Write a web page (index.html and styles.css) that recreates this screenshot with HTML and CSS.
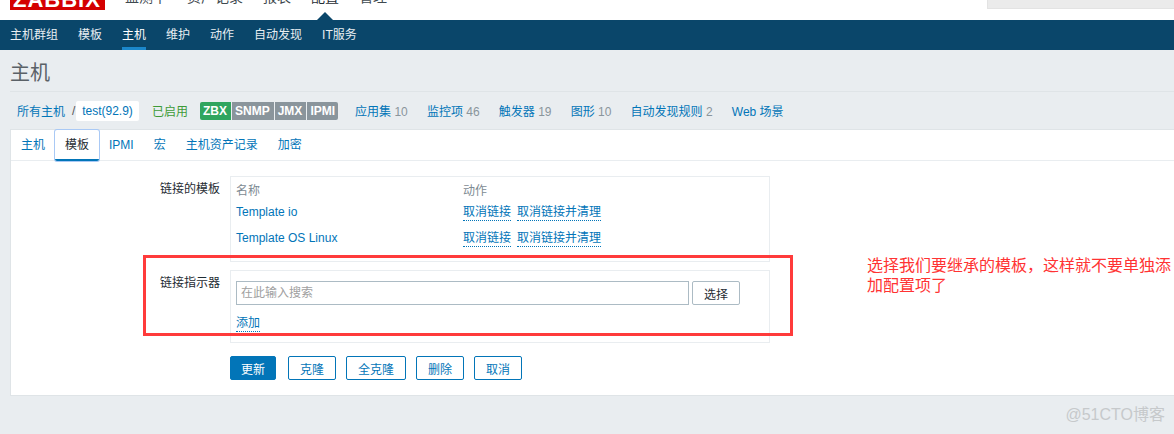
FILE: index.html
```html
<!DOCTYPE html>
<html lang="zh">
<head>
<meta charset="utf-8">
<title>主机 - Zabbix</title>
<link rel="stylesheet" href="styles.css">
</head>
<body>
<header class="topbar">
  <div class="logo">ZABBIX</div>
  <nav class="mainnav">
    <a class="mainlink">监测中</a>
    <a class="mainlink">资产记录</a>
    <a class="mainlink">报表</a>
    <a class="mainlink current">配置</a>
    <a class="mainlink">管理</a>
  </nav>
  <div class="searchbox"></div>
</header>
<nav class="subnav">
  <a>主机群组</a>
  <a>模板</a>
  <a class="current">主机</a>
  <a>维护</a>
  <a>动作</a>
  <a>自动发现</a>
  <a>IT服务</a>
</nav>
<main class="page">
  <h1 class="title">主机</h1>
  <div class="hostbar">
    <a class="crumb">所有主机</a>
    <span class="slash">/</span>
    <a class="crumb-current">test(92.9)</a>
    <span class="enabled">已启用</span>
    <div class="badges">
      <span class="badge on">ZBX</span>
      <span class="badge">SNMP</span>
      <span class="badge">JMX</span>
      <span class="badge">IPMI</span>
    </div>
    <a class="hostlink first">应用集 <em>10</em></a>
    <a class="hostlink">监控项 <em>46</em></a>
    <a class="hostlink">触发器 <em>19</em></a>
    <a class="hostlink">图形 <em>10</em></a>
    <a class="hostlink">自动发现规则 <em>2</em></a>
    <a class="hostlink">Web 场景</a>
  </div>
  <section class="card">
    <div class="tabs">
      <a>主机</a>
      <a class="active">模板</a>
      <a>IPMI</a>
      <a>宏</a>
      <a>主机资产记录</a>
      <a>加密</a>
    </div>
    <form class="form">
      <div class="formrow">
        <label class="formlabel">链接的模板</label>
        <div class="box linked">
          <div class="lt-row head"><span class="c-name">名称</span><span>动作</span></div>
          <div class="lt-row"><a class="c-name tpl">Template io</a><span class="acts"><a class="dotted">取消链接</a><a class="dotted">取消链接并清理</a></span></div>
          <div class="lt-row"><a class="c-name tpl">Template OS Linux</a><span class="acts"><a class="dotted">取消链接</a><a class="dotted">取消链接并清理</a></span></div>
        </div>
      </div>
      <div class="formrow">
        <label class="formlabel">链接指示器</label>
        <div class="box picker">
          <div class="pickrow">
            <input class="search" type="text" placeholder="在此输入搜索">
            <button class="btn-grey" type="button">选择</button>
          </div>
          <a class="dotted add">添加</a>
        </div>
      </div>
      <div class="actions">
        <button class="btn primary" type="button">更新</button>
        <button class="btn clone" type="button">克隆</button>
        <button class="btn wide" type="button">全克隆</button>
        <button class="btn" type="button">删除</button>
        <button class="btn" type="button">取消</button>
      </div>
    </form>
    <div class="callout"></div>
    <p class="note">选择我们要继承的模板，这样就不要单独添加配置项了</p>
  </section>
</main>
<div class="watermark">@51CTO博客</div>
</body>
</html>
```
FILE: styles.css
```css
* { box-sizing: border-box; }

html, body { margin: 0; height: 434px; overflow: hidden; }

body {
  position: relative;
  background: #e9edf0;
  font-family: "Liberation Sans", "Noto Sans CJK SC", sans-serif;
  font-size: 12px;
  color: #1f2c33;
}

a { color: #0275b8; text-decoration: none; }

/* Top bar */
.topbar {
  height: 20px;
  background: #fff;
  position: relative;
  display: flex;
  overflow: hidden;
}

.logo {
  width: 95px;
  height: 10px;
  margin-left: 10px;
  padding-left: 3px;
  background: #d40000;
  color: #fff;
  font-size: 22px;
  font-weight: bold;
  line-height: 0;
  letter-spacing: 1px;
  overflow: hidden;
  white-space: nowrap;
}

.mainnav {
  display: flex;
  gap: 20px;
  height: 33px;
  margin: -13px 0 0 20px;
}

.mainlink {
  font-size: 14px;
  line-height: 20px;
  color: #3f4a50;
  white-space: nowrap;
}

.mainnav .current { position: relative; color: #1f2c33; }

.mainnav .current::after {
  content: "";
  position: absolute;
  left: 50%;
  top: 25px;
  margin-left: -8px;
  border: 8px solid transparent;
  border-top: 0;
  border-bottom-color: #0a466a;
}

.searchbox {
  position: absolute;
  right: 0;
  top: 0;
  width: 187px;
  height: 9px;
  background: #ebebeb;
  border: 1px solid #e3e3e3;
  border-top: 0;
  border-right: 0;
}

/* Second level navigation */
.subnav {
  height: 30px;
  background: #0a466a;
  display: flex;
  padding-left: 10px;
  gap: 20px;
}

.subnav a {
  color: #e8eef2;
  line-height: 31px;
  height: 30px;
  white-space: nowrap;
}

.subnav a.current { color: #fff; border-bottom: 3px solid #1b87cb; }

/* Page head */
.title {
  height: 42px;
  margin: 0 0 0 10px;
  padding-top: 9px;
  font-size: 20px;
  line-height: 28px;
  font-weight: normal;
  color: #5a6167;
  border-bottom: 1px solid #dfe4e7;
}

.hostbar {
  height: 37px;
  margin-left: 17px;
  display: flex;
  align-items: center;
  white-space: nowrap;
}

.slash { margin-left: 7px; color: #555; width: 5px; }

.crumb-current {
  background: #fff;
  margin-left: -1px;
  width: 63px;
  height: 20px;
  line-height: 20px;
  text-align: center;
  border-radius: 2px;
}

.enabled { color: #3d9b38; margin-left: 13px; width: 48px; }

.badges { display: flex; height: 18px; border-radius: 2px; overflow: hidden; }

.badge {
  background: #8a959c;
  color: #fff;
  font-weight: bold;
  line-height: 18px;
  padding: 0 4px 0 3px;
  margin-right: 1px;
}

.badge:last-child { margin-right: 0; padding-right: 3px; }
.badge.on { background: #30a55f; }

.hostlink { margin-left: 19.2px; }
.hostlink.first { margin-left: 17px; }
.hostlink em { font-style: normal; color: #8a959c; }

/* Card */
.card {
  position: relative;
  margin-left: 10px;
  height: 267px;
  background: #fff;
  border: 1px solid #dfe4e7;
  border-right: 0;
}

.tabs {
  display: flex;
  height: 31px;
  border-bottom: 1px solid #e9edf0;
}

.tabs a {
  padding: 0 10px;
  height: 31px;
  line-height: 31px;
  white-space: nowrap;
}

.tabs a.active {
  color: #1f2c33;
  border-bottom: 2px solid #0275b8;
  box-shadow: 0 0 0 1px #a9c9f5;
  border-radius: 2px;
}

.form { padding-top: 15px; }

.formrow { display: flex; }
.formrow + .formrow { margin-top: 8px; }

.formlabel {
  width: 209px;
  text-align: right;
  padding-top: 3px;
  margin-right: 10px;
}

.box {
  width: 540px;
  border: 1px solid #e9edf0;
  padding: 5px;
}

.linked { height: 86px; padding-top: 6px; }

.lt-row { display: flex; height: 26px; align-items: flex-start; }
.lt-row.head { height: 21px; color: #7d8a92; line-height: 17px; }
.c-name { width: 227px; flex: none; }
.tpl { line-height: 17px; }

.acts { display: flex; gap: 6px; }

.dotted {
  border-bottom: 1px dotted #0275b8;
  line-height: 15px;
  height: 16px;
  margin-top: 1px;
}

.picker { height: 73px; padding-top: 10px; }

.pickrow { display: flex; gap: 3px; }

.search {
  width: 453px;
  height: 24px;
  border: 1px solid #acbbc4;
  padding: 0 4px;
  font: inherit;
  background: #fff;
}

.search::placeholder { color: #a0a0a0; opacity: 1; }

.btn-grey {
  width: 48px;
  height: 24px;
  border: 1px solid #acbbc4;
  border-radius: 2px;
  background: #fff;
  font: inherit;
  color: #1f2c33;
  padding: 0;
}

.add { display: inline-block; margin-top: 11px; }

.actions {
  display: flex;
  margin: 13px 0 0 219px;
  gap: 10px;
}

.btn {
  width: 48px;
  height: 24px;
  background: #fff;
  border: 1px solid #0275b8;
  border-radius: 2px;
  color: #0275b8;
  font: inherit;
  padding: 0;
}

.btn.primary { background: #0275b8; color: #fff; width: 46px; margin-right: 2px; }
.btn.wide { width: 60px; }

/* Red annotation laid over the form */
.callout {
  position: absolute;
  left: 132px;
  top: 125px;
  width: 650px;
  height: 81px;
  border: 3px solid #ff3b3b;
}

.note {
  position: absolute;
  left: 856px;
  top: 126px;
  width: 306px;
  margin: 0;
  color: #ff3333;
  font-size: 16px;
  line-height: 20px;
}

.watermark {
  position: absolute;
  right: 9px;
  top: 405px;
  font-size: 16px;
  line-height: 20px;
  color: #c6c9cb;
}
```
